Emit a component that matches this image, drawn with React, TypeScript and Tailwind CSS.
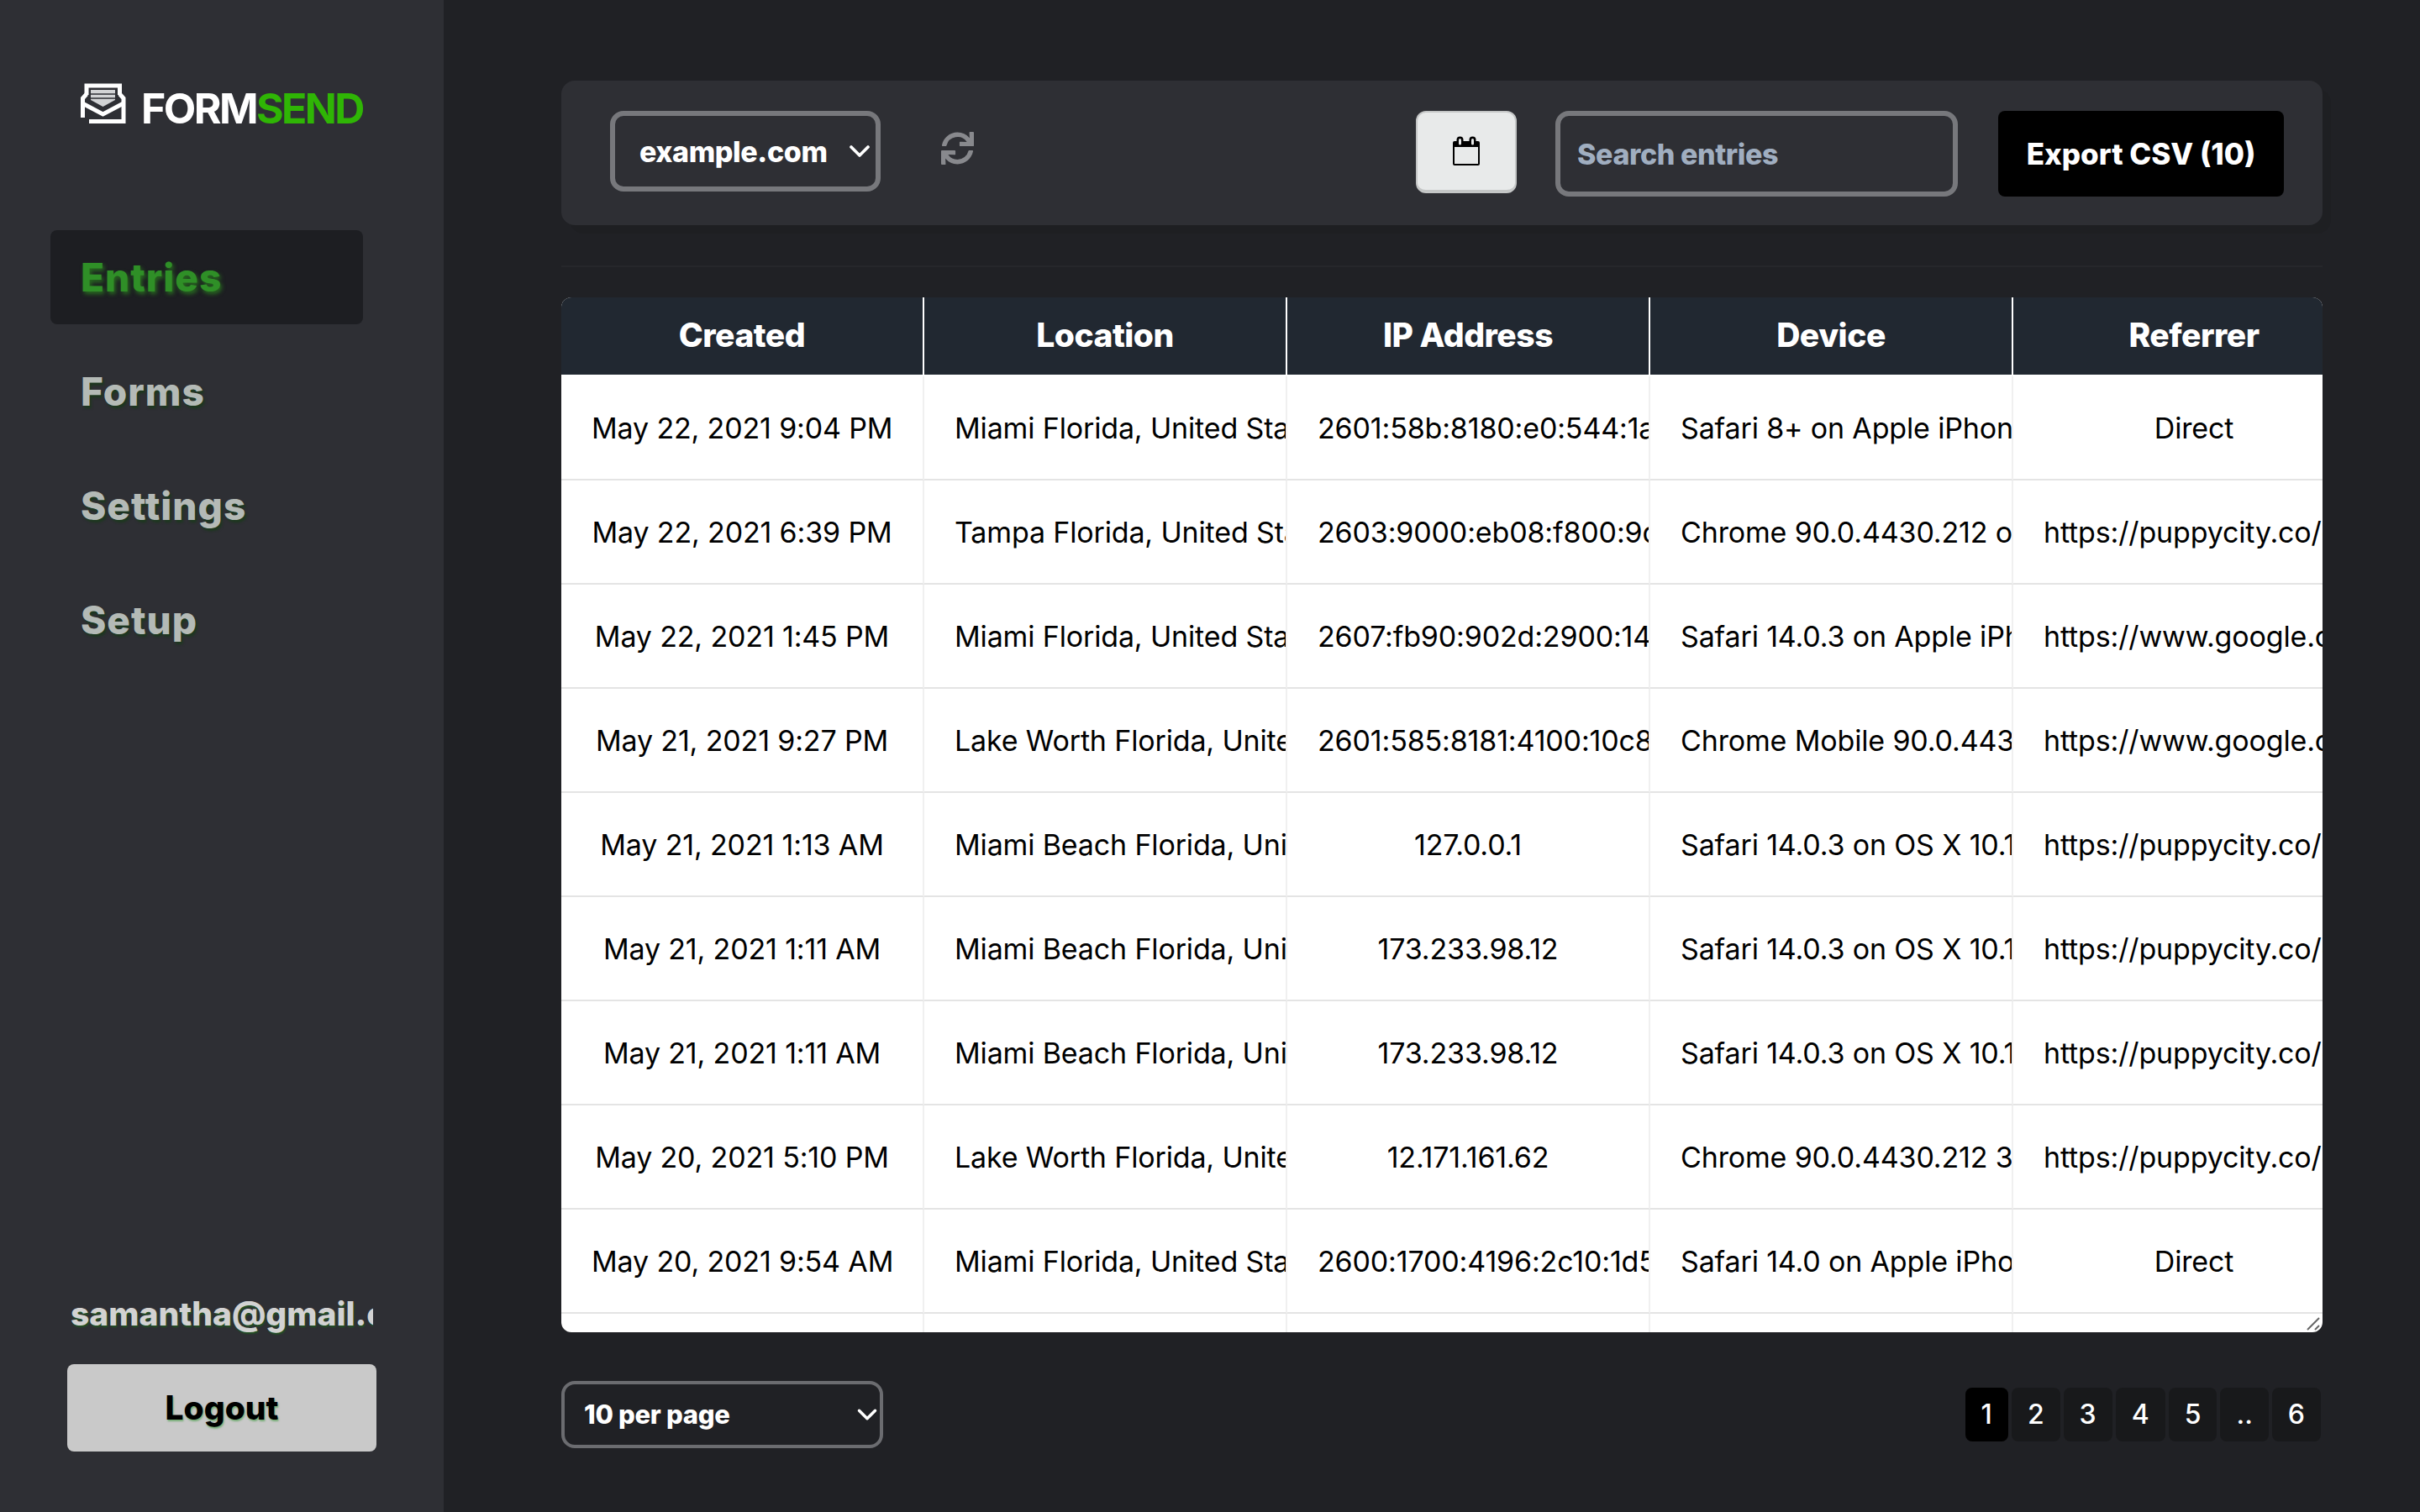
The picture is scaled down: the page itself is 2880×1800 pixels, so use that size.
import { FaSync } from "react-icons/fa";
import { ChevronDown } from "lucide-react";

const rows = [
  ["May 22, 2021 9:04 PM", "Miami Florida, United States", "2601:58b:8180:e0:544:1a2f:9c3e:77d1", "Safari 8+ on Apple iPhone", "Direct"],
  ["May 22, 2021 6:39 PM", "Tampa Florida, United States", "2603:9000:eb08:f800:9d41:2c7:b1a:60e", "Chrome 90.0.4430.212 on OS X 10.15.7", "https://puppycity.co/contact"],
  ["May 22, 2021 1:45 PM", "Miami Florida, United States", "2607:fb90:902d:2900:14c3:88f:2e1:a0b", "Safari 14.0.3 on Apple iPhone", "https://www.google.com/"],
  ["May 21, 2021 9:27 PM", "Lake Worth Florida, United States", "2601:585:8181:4100:10c8:77a:c3d:12f", "Chrome Mobile 90.0.4430.210 on Android", "https://www.google.com/"],
  ["May 21, 2021 1:13 AM", "Miami Beach Florida, United States", "127.0.0.1", "Safari 14.0.3 on OS X 10.15.6", "https://puppycity.co/contact"],
  ["May 21, 2021 1:11 AM", "Miami Beach Florida, United States", "173.233.98.12", "Safari 14.0.3 on OS X 10.15.6", "https://puppycity.co/contact"],
  ["May 21, 2021 1:11 AM", "Miami Beach Florida, United States", "173.233.98.12", "Safari 14.0.3 on OS X 10.15.6", "https://puppycity.co/contact"],
  ["May 20, 2021 5:10 PM", "Lake Worth Florida, United States", "12.171.161.62", "Chrome 90.0.4430.212 3", "https://puppycity.co/contact"],
  ["May 20, 2021 9:54 AM", "Miami Florida, United States", "2600:1700:4196:2c10:1d5e:90b:7f2:ce4", "Safari 14.0 on Apple iPhone", "Direct"],
  ["May 19, 2021 3:22 PM", "Miami Florida, United States", "173.233.98.12", "Safari 14.0.3 on OS X 10.15.6", "Direct"],
];

const columns = ["Created", "Location", "IP Address", "Device", "Referrer"];
const pages = ["1", "2", "3", "4", "5", "..", "6"];

function LogoMark() {
  return (
    <svg width="54" height="49" viewBox="0 0 54 49" fill="none">
      <path d="M12 8H41V20L26.5 28L12 20Z" fill="#d2d3d5" />
      <path d="M12 13H41M12 18H41" stroke="#2e2f34" strokeWidth="1.6" />
      <g stroke="#fff" strokeWidth="5">
        <path d="M7 14V3H46.5V14" />
        <path d="M46.5 13L51 18V45.5H10" />
        <path d="M7 13L2.5 18V41" />
        <path d="M3 24.5L26.5 37L50 24.5" />
      </g>
    </svg>
  );
}

function CalendarIcon() {
  return (
    <svg width="34" height="36" viewBox="0 0 34 36">
      <path d="M3 6H31A2 2 0 0 1 33 8V33A2 2 0 0 1 31 35H3A2 2 0 0 1 1 33V8A2 2 0 0 1 3 6Z" fill="#000" />
      <rect x="3" y="13" width="28" height="20" fill="#e8eaea" />
      <rect x="5.5" y="0.5" width="8" height="12" rx="4" fill="#000" />
      <rect x="20.5" y="0.5" width="8" height="12" rx="4" fill="#000" />
      <rect x="8" y="3" width="3" height="7.5" rx="1.5" fill="#e8eaea" />
      <rect x="23" y="3" width="3" height="7.5" rx="1.5" fill="#e8eaea" />
    </svg>
  );
}

export default function App() {
  return (
    <div className="flex h-screen overflow-hidden bg-[#202125] text-white [font-family:Inter,sans-serif]">
      {/* Sidebar */}
      <aside className="flex w-[528px] shrink-0 flex-col bg-[#2e2f34] pb-[72px]">
        <div className="mt-[99px] ml-[96px] flex items-start">
          <LogoMark />
          <span className="mt-[5px] ml-[18px] text-[50px] leading-[50px] font-bold tracking-[-2.6px]">
            FORM<span className="text-[#2fb505]">SEND</span>
          </span>
        </div>

        <nav className="mt-[120px] ml-[60px] flex w-[372px] flex-col gap-6">
          {["Entries", "Forms", "Settings", "Setup"].map((item) => (
            <a
              key={item}
              className={
                item === "Entries"
                  ? "flex h-[112px] items-center rounded-lg bg-[#1d1e22] pl-9 text-[46px] font-extrabold tracking-[1px] text-[#2f8f27] [text-shadow:2px_3px_5px_rgba(47,160,30,0.6)]"
                  : "flex h-[112px] items-center rounded-lg pl-9 text-[46px] font-extrabold tracking-[1px] text-[#b4bab6] [text-shadow:2px_3px_3px_rgba(20,60,20,0.7)]"
              }
            >
              {item}
            </a>
          ))}
        </nav>

        <div className="mt-auto ml-[84px] w-[360px] overflow-hidden text-[39px] leading-[60px] font-extrabold whitespace-nowrap text-[#d2d2d2] [text-shadow:1px_2px_2px_rgba(30,90,30,0.8)]">
          samantha@gmail.com
        </div>
        <button className="mt-[30px] ml-[80px] h-[104px] w-[368px] rounded-lg bg-[#c9c9c9] text-[39px] font-extrabold text-black [text-shadow:1px_2px_2px_rgba(40,150,40,0.5)]">
          Logout
        </button>
      </aside>

      {/* Main */}
      <main className="min-w-0 flex-1 pt-[96px] pr-[116px] pl-[140px]">
        <section className="flex h-[172px] items-start rounded-2xl bg-[#2e2f34] pt-9 pr-[46px] pl-[58px] shadow-[10px_10px_0_rgba(0,0,0,0.06)]">
          <div className="relative">
            <select className="h-[96px] w-[322px] appearance-none rounded-2xl border-[6px] border-[#77787c] bg-transparent pl-[29px] text-[34px] font-extrabold tracking-[-0.4px] text-white">
              <option>example.com</option>
            </select>
            <ChevronDown className="absolute top-[28px] right-[5px] h-10 w-10 text-white" strokeWidth={2.2} />
          </div>
          <FaSync className="mt-[25px] ml-[72px] h-[39px] w-[39px] text-[#88898d]" />

          <button className="ml-auto flex h-[98px] w-[120px] items-center justify-center rounded-xl border-2 border-b-4 border-[#c4c6c6] bg-[#e8eaea]">
            <CalendarIcon />
          </button>
          <input
            placeholder="Search entries"
            className="ml-[46px] h-[102px] w-[479px] rounded-2xl border-[6px] border-[#77787c] bg-transparent pl-5 text-[34px] font-extrabold tracking-[-0.4px] text-white placeholder:text-[#a0aec0]"
          />
          <button className="ml-[48px] h-[102px] w-[340px] rounded-lg bg-black text-[35px] font-extrabold text-white">
            Export CSV (10)
          </button>
        </section>

        <hr className="mt-12 border-t-2 border-[#26272b]" />

        {/* Entries table */}
        <div className="relative mt-9 h-[1232px] overflow-hidden rounded-xl bg-white">
          <table className="w-[2160px] table-fixed border-separate border-spacing-0">
            <thead>
              <tr>
                {columns.map((col) => (
                  <th
                    key={col}
                    className="h-[94px] w-[432px] border-r-2 border-b-2 border-white bg-[#212831] pb-0.5 text-center text-[39px] font-extrabold tracking-[-0.5px] text-white"
                  >
                    {col}
                  </th>
                ))}
              </tr>
            </thead>
            <tbody>
              {rows.map((row, i) => (
                <tr key={i}>
                  {row.map((cell, j) => (
                    <td
                      key={j}
                      className="h-[124px] overflow-hidden border-r-2 border-b-2 border-r-[#f0f0f0] border-b-[#e4e4e4] px-9 text-center text-[34px] tracking-[-0.15px] whitespace-nowrap text-black"
                    >
                      {cell}
                    </td>
                  ))}
                </tr>
              ))}
            </tbody>
          </table>
          <svg className="absolute right-[1px] bottom-[1px]" width="18" height="18" viewBox="0 0 18 18" stroke="#666" strokeWidth="2">
            <path d="M1 16L15 2M10 16L15 11" />
          </svg>
        </div>

        <div className="mt-[58px] flex items-center justify-between">
          <div className="relative">
            <select className="h-[80px] w-[383px] appearance-none rounded-2xl border-4 border-[#6b6c70] bg-transparent pl-[23px] text-[31px] font-extrabold tracking-[-0.3px] text-white">
              <option>10 per page</option>
            </select>
            <ChevronDown className="absolute top-[21px] right-0 h-[38px] w-[38px] text-white" strokeWidth={2.2} />
          </div>
          <div className="mr-[2px] flex gap-1">
            {pages.map((page) => (
              <button
                key={page}
                className={
                  page === "1"
                    ? "h-16 rounded-lg bg-black px-[19px] text-[32px] font-medium text-white"
                    : "h-16 rounded-lg bg-[#18191b] px-[19px] text-[32px] font-medium text-white"
                }
              >
                {page}
              </button>
            ))}
          </div>
        </div>
      </main>
    </div>
  );
}
